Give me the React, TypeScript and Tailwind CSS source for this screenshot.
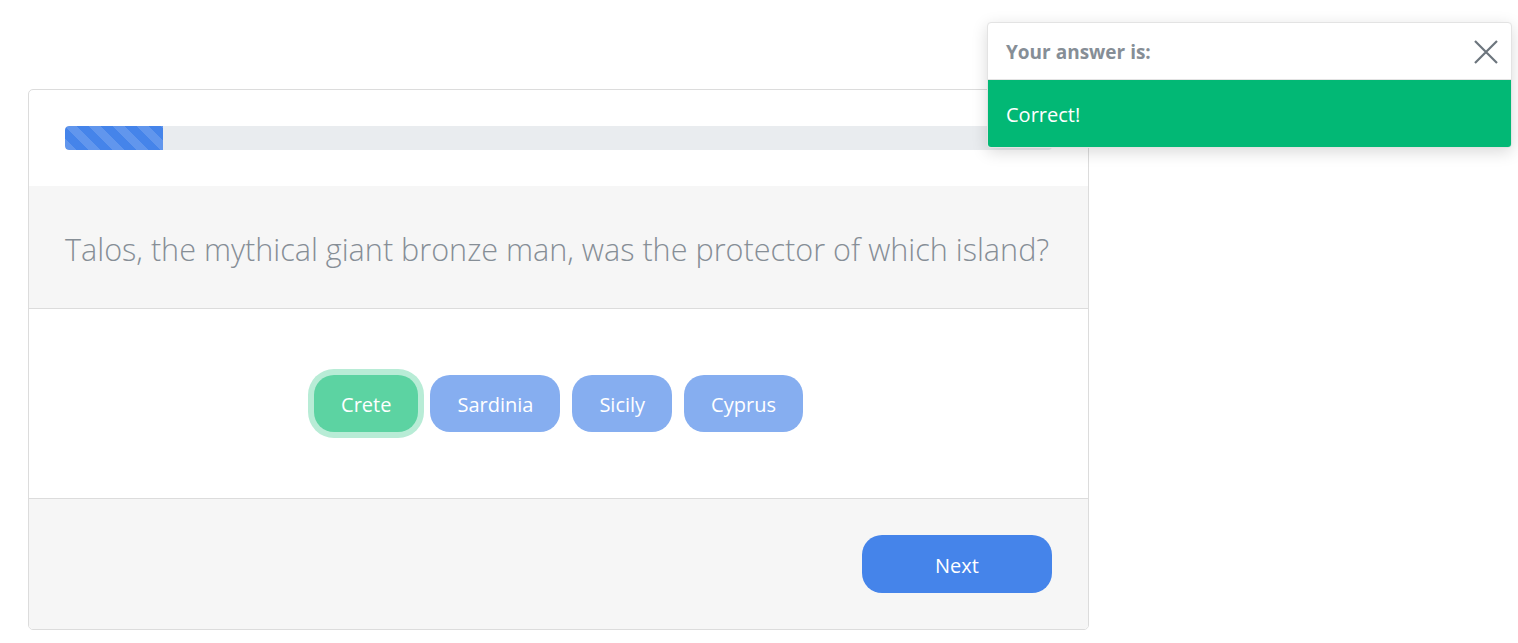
import React from "react";

export default function App() {
  const font = { fontFamily: '"Open Sans", "Noto Sans", sans-serif' };
  return (
    <div className="relative min-h-[643px] w-[1518px] bg-white" style={font}>
      <div className="pt-[89px] pl-[28px]">
        <div className="w-[1061px] overflow-hidden rounded-[5px] border border-[#dcdcdc] bg-white">
          <div className="px-9 py-9">
            <div className="h-[24px] w-full overflow-hidden rounded-[4px] bg-[#e9ecef]">
              <div
                className="h-full w-[98px] rounded-l-[4px] bg-[#4584ea]"
                style={{
                  backgroundImage:
                    "linear-gradient(45deg, rgba(255,255,255,.15) 25%, transparent 25%, transparent 50%, rgba(255,255,255,.15) 50%, rgba(255,255,255,.15) 75%, transparent 75%, transparent)",
                  backgroundSize: "24px 24px",
                }}
              />
            </div>
          </div>
          <div className="border-b border-[#dcdcdc] bg-[#f6f6f6] px-9 pt-[38px] pb-[34px]">
            <p className="whitespace-nowrap text-[30.6px] font-light leading-[50px] text-[#868e96]">
              Talos, the mythical giant bronze man, was the protector of which island?
            </p>
          </div>
          <div className="flex items-center justify-center gap-3 py-[66px]">
            <button className="h-[57px] rounded-[20px] bg-[#5cd3a2] px-[27px] pt-[2px] text-[20px] text-white ring-[6px] ring-[#b8ecd6]">
              Crete
            </button>
            {["Sardinia", "Sicily", "Cyprus"].map((t) => (
              <button
                key={t}
                className="h-[57px] rounded-[20px] bg-[#86aef0] px-[27px] pt-[2px] text-[20px] text-white"
              >
                {t}
              </button>
            ))}
          </div>
          <div className="flex justify-end border-t border-[#dcdcdc] bg-[#f6f6f6] px-9 py-9">
            <button className="h-[58px] w-[190px] rounded-[20px] bg-[#4584ea] pt-[3px] text-[20px] text-white">
              Next
            </button>
          </div>
        </div>
      </div>

      <div className="absolute left-[987px] top-[22px] w-[525px] overflow-hidden rounded-[4px] border border-[#e3e3e3] bg-white shadow-[0_4px_16px_rgba(0,0,0,0.15)]">
        <div className="flex h-[57px] items-center justify-between border-b border-[#e3e3e3] pl-[18px] pr-[12px]">
          <span className="pt-[3px] text-[19px] font-bold text-[#868e96]">Your answer is:</span>
          <svg width="26" height="26" viewBox="0 0 26 26" className="mt-[2px] text-[#6c757d]">
            <path d="M2 2 L24 24 M24 2 L2 24" stroke="currentColor" strokeWidth="2.2" fill="none" />
          </svg>
        </div>
        <div className="flex h-[67px] items-center bg-[#02b875] pl-[18px] pt-[2px] text-[20px] text-white">
          Correct!
        </div>
      </div>
    </div>
  );
}
